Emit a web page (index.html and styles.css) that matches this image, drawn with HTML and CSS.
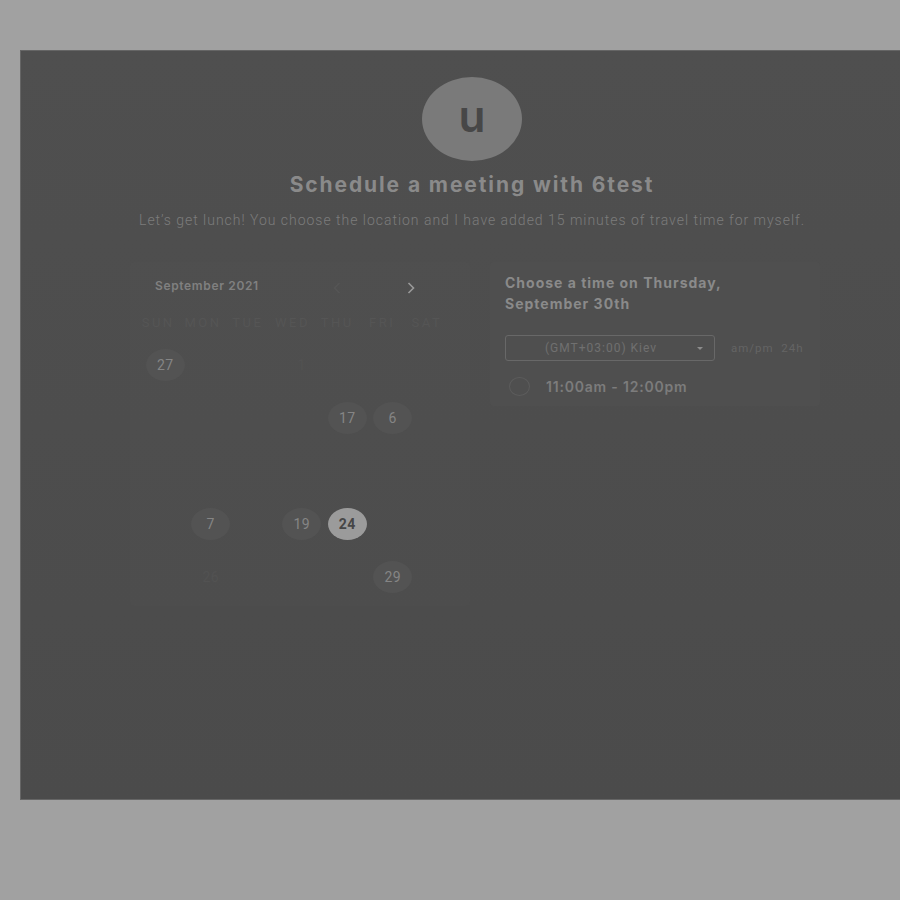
FILE: index.html
```html
<!DOCTYPE html>
<html>
<head>
<meta charset="utf-8">
<link rel="stylesheet" href="styles.css">
</head>
<body>
<div class="panel">
  <div class="avatar">u</div>
  <h1 class="title">Schedule a meeting with 6test</h1>
  <p class="subtitle">Let’s get lunch! You choose the location and I have added 15 minutes of travel time for myself.</p>
  <div class="cards">
    <div class="cal-card">
      <div class="cal-head">
        <span class="month">September 2021</span>
        <div class="nav">
          <svg class="chev dim" width="8" height="12" viewBox="0 0 8 12"><path d="M6.5 1 L1.5 6 L6.5 11" fill="none" stroke="currentColor" stroke-width="1.6"/></svg>
          <svg class="chev" width="8" height="12" viewBox="0 0 8 12"><path d="M1.5 1 L6.5 6 L1.5 11" fill="none" stroke="currentColor" stroke-width="1.6"/></svg>
        </div>
      </div>
      <div class="weekdays">
        <span>SUN</span><span>MON</span><span>TUE</span><span>WED</span><span>THU</span><span>FRI</span><span>SAT</span>
      </div>
      <div class="days">
        <span class="day avail">27</span><span class="day"></span><span class="day"></span><span class="day off">1</span><span class="day"></span><span class="day"></span><span class="day"></span>
        <span class="day"></span><span class="day"></span><span class="day"></span><span class="day"></span><span class="day avail">17</span><span class="day avail">6</span><span class="day"></span>
        <span class="day"></span><span class="day"></span><span class="day"></span><span class="day"></span><span class="day"></span><span class="day"></span><span class="day"></span>
        <span class="day"></span><span class="day avail">7</span><span class="day"></span><span class="day avail">19</span><span class="day sel">24</span><span class="day"></span><span class="day"></span>
        <span class="day"></span><span class="day off">26</span><span class="day"></span><span class="day"></span><span class="day"></span><span class="day avail">29</span><span class="day"></span>
      </div>
    </div>
    <div class="time-card">
      <h2 class="time-title">Choose a time on Thursday,<br>September 30th</h2>
      <div class="tz-row">
        <div class="select">
          <span>(GMT+03:00) Kiev</span>
          <span class="caret"></span>
        </div>
        <span class="fmt">am/pm&nbsp;&nbsp;24h</span>
      </div>
      <div class="slot">
        <span class="radio"></span>
        <span class="slot-text">11:00am - 12:00pm</span>
      </div>
    </div>
  </div>
</div>
</body>
</html>
```
FILE: styles.css
```css
html, body {
  margin: 0;
  padding: 0;
}
body {
  background: #a1a1a1;
  width: 900px;
  height: 900px;
  overflow: hidden;
  font-family: Roboto, "Liberation Sans", sans-serif;
}
.panel {
  margin: 50px 0 0 20px;
  width: 904px;
  height: 750px;
  box-sizing: border-box;
  border: 1px solid #656565;
  background: linear-gradient(#4f4f4f, #4b4b4b);
  padding-top: 26px;
  display: flex;
  flex-direction: column;
  align-items: center;
}
.avatar {
  width: 100px;
  height: 84px;
  border-radius: 50%;
  background: #7a7a7a;
  color: #474747;
  font-family: Inter, "Liberation Sans", sans-serif;
  font-weight: 600;
  font-size: 44px;
  display: flex;
  align-items: center;
  justify-content: center;
  line-height: 1;
  padding-bottom: 6px;
  box-sizing: border-box;
}
.title {
  margin: 12px 0 0;
  font-family: Inter, "Liberation Sans", sans-serif;
  font-weight: 700;
  font-size: 21px;
  line-height: 24px;
  letter-spacing: 1.9px;
  color: #8a8a8a;
}
.subtitle {
  margin: 14px 0 0;
  font-size: 14px;
  line-height: 18px;
  font-weight: 300;
  color: #7c7c7c;
  letter-spacing: 0.98px;
}
.cards {
  margin-top: 33px;
  display: flex;
  gap: 20px;
  align-items: flex-start;
  margin-left: 6px;
}
.cal-card {
  width: 340px;
  box-sizing: border-box;
  padding: 15px 9px 2px 12.5px;
  background: rgba(255, 255, 255, 0.006);
  border-radius: 4px;
}
.cal-head {
  display: flex;
  align-items: center;
  height: 16px;
}
.month {
  margin-left: 12.5px;
  font-family: Inter, "Liberation Sans", sans-serif;
  font-weight: 600;
  font-size: 12px;
  letter-spacing: 0.65px;
  color: #808080;
}
.nav {
  margin-left: auto;
  margin-right: 46px;
  display: flex;
  gap: 66px;
  align-items: center;
  padding-top: 6px;
}
.chev { color: #9a9a9a; display: block; }
.chev.dim { color: #555555; }
.weekdays {
  margin-top: 20px;
  margin-left: -8px;
  display: grid;
  grid-template-columns: repeat(7, 44.8px);
  height: 20px;
  line-height: 20px;
}
.weekdays span {
  text-align: center;
  font-size: 13px;
  letter-spacing: 2.5px;
  padding-left: 2.5px;
  color: #555555;
}
.days {
  margin-top: 5.5px;
  display: grid;
  grid-template-columns: repeat(7, 45.5px);
  grid-auto-rows: 53px;
}
.day {
  display: flex;
  align-items: center;
  justify-content: center;
  align-self: center;
  justify-self: center;
  width: 39px;
  height: 32px;
  border-radius: 50%;
  font-size: 14px;
  letter-spacing: 0.5px;
  color: #858585;
}
.day.avail { background: #535353; }
.day.off { color: #525252; }
.day.sel {
  background: #9b9b9b;
  color: #464646;
  font-weight: 700;
}
.time-card {
  width: 330px;
  box-sizing: border-box;
  padding: 10px 15px 10px 15px;
  background: #4f4f4f;
  border-radius: 4px;
}
.time-title {
  margin: 0;
  font-family: Inter, "Liberation Sans", sans-serif;
  font-weight: 700;
  font-size: 14px;
  line-height: 21px;
  letter-spacing: 1px;
  color: #8a8a8a;
}
.tz-row {
  margin-top: 21px;
  display: flex;
  align-items: center;
  gap: 16px;
}
.select {
  width: 210px;
  height: 26px;
  box-sizing: border-box;
  border: 1px solid #686868;
  border-radius: 3px;
  display: flex;
  align-items: center;
  padding-left: 39px;
  padding-right: 11px;
  font-size: 12px;
  letter-spacing: 1px;
  color: #707070;
}
.caret {
  margin-left: auto;
  width: 0;
  height: 0;
  border-left: 3px solid transparent;
  border-right: 3px solid transparent;
  border-top: 3px solid #8c8c8c;
}
.fmt {
  font-size: 11.5px;
  letter-spacing: 1px;
  color: #646464;
}
.slot {
  margin-top: 16px;
  display: flex;
  align-items: center;
  gap: 16px;
  padding-left: 4px;
}
.radio {
  width: 21px;
  height: 19px;
  box-sizing: border-box;
  border: 1px solid #5c5c5c;
  border-radius: 50%;
}
.slot-text {
  font-family: Inter, "Liberation Sans", sans-serif;
  font-weight: 600;
  font-size: 14px;
  letter-spacing: 0.8px;
  color: #7c7c7c;
}
```
